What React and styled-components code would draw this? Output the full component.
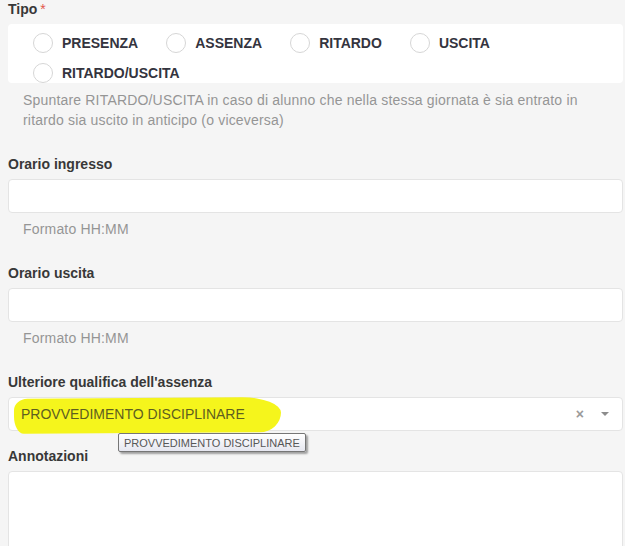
import React from "react";
import styled, { createGlobalStyle } from "styled-components";

const GlobalStyle = createGlobalStyle`
  html, body {
    margin: 0;
    padding: 0;
    background: #f5f5f5;
  }
  body {
    font-family: "Liberation Sans", Arial, sans-serif;
    font-size: 14px;
    color: #333;
  }
  * { box-sizing: border-box; }
`;

const Form = styled.div`
  padding: 0 2px 0 8px;
`;

const Group = styled.div`
  position: relative;
  margin-bottom: ${(props) => props.gap || 25}px;
`;

const Label = styled.label`
  display: block;
  font-weight: bold;
  font-size: 14px;
  line-height: 18px;
  color: #383838;
  margin-bottom: 6px;
`;

const Required = styled.span`
  color: #e2574c;
  font-weight: normal;
  margin-left: 3px;
`;

const RadioPanel = styled.div`
  background: #fff;
  border-radius: 4px;
  height: 59px;
  overflow: hidden;
  padding: 4px 0 0 25px;
  display: flex;
  flex-wrap: wrap;
  column-gap: 28px;
  align-content: flex-start;
`;

const RadioItem = styled.label`
  display: flex;
  align-items: center;
  height: 30px;
  gap: 9px;
  font-weight: bold;
  font-size: 14px;
  color: #34343e;
  cursor: pointer;
`;

const Circle = styled.span`
  width: 20px;
  height: 20px;
  border-radius: 50%;
  border: 1px solid #d6d6d6;
  background: #fff;
  flex-shrink: 0;
`;

const Help = styled.p`
  margin: ${(props) => props.top || 6}px 0 0;
  padding: 0 15px;
  font-size: 14px;
  line-height: 20px;
  letter-spacing: 0.18px;
  color: #959595;
`;

const Input = styled.div`
  height: 34px;
  background: #fff;
  border: 1px solid #e4e4e4;
  border-radius: 4px;
`;

const Select = styled.div`
  position: relative;
  height: 34px;
  background: #fff;
  border: 1px solid #e4e4e4;
  border-radius: 4px;
  display: flex;
  align-items: center;
  padding: 0 12px;
`;

const Marker = styled.span`
  position: absolute;
  left: 5px;
  top: 0px;
  width: 267px;
  height: 35px;
  background: #f5f51c;
  border-radius: 14px 40px 22px 10px / 12px 16px 20px 18px;
  transform: rotate(-0.4deg);
`;

const Value = styled.span`
  position: relative;
  flex: 1;
  font-size: 14px;
  color: #5e5e20;
  white-space: nowrap;
`;

const Clear = styled.span`
  font-size: 14px;
  font-weight: bold;
  color: #9a9a9a;
  margin-right: 17px;
`;

const Caret = styled.span`
  width: 0;
  height: 0;
  border-left: 4px solid transparent;
  border-right: 4px solid transparent;
  border-top: 4px solid #8c8c8c;
  margin-right: 1px;
`;

const Tooltip = styled.div`
  position: absolute;
  left: 110px;
  top: 60px;
  height: 19px;
  padding: 0 5px;
  display: flex;
  align-items: center;
  border: 1px solid #767676;
  border-radius: 2px;
  background: linear-gradient(#ffffff, #e6e7f0);
  box-shadow: 2px 2px 2px rgba(0, 0, 0, 0.35);
  font-size: 11px;
  color: #575757;
  white-space: nowrap;
  z-index: 2;
`;

const TextArea = styled.div`
  height: 110px;
  background: #fff;
  border: 1px solid #e4e4e4;
  border-radius: 4px;
`;

const tipi = ["PRESENZA", "ASSENZA", "RITARDO", "USCITA", "RITARDO/USCITA"];

export default function App() {
  return (
    <>
      <GlobalStyle />
      <Form>
        <Group>
          <Label>
            Tipo<Required>*</Required>
          </Label>
          <RadioPanel>
            {tipi.map((t) => (
              <RadioItem key={t}>
                <Circle />
                {t}
              </RadioItem>
            ))}
          </RadioPanel>
          <Help top={7}>
            Spuntare RITARDO/USCITA in caso di alunno che nella stessa giornata è sia entrato in
            ritardo sia uscito in anticipo (o viceversa)
          </Help>
        </Group>

        <Group>
          <Label>Orario ingresso</Label>
          <Input />
          <Help>Formato HH:MM</Help>
        </Group>

        <Group>
          <Label>Orario uscita</Label>
          <Input />
          <Help>Formato HH:MM</Help>
        </Group>

        <Group gap={16}>
          <Label>Ulteriore qualifica dell'assenza</Label>
          <Select>
            <Marker />
            <Value>PROVVEDIMENTO DISCIPLINARE</Value>
            <Clear>×</Clear>
            <Caret />
          </Select>
          <Tooltip>PROVVEDIMENTO DISCIPLINARE</Tooltip>
        </Group>

        <Group>
          <Label>Annotazioni</Label>
          <TextArea />
        </Group>
      </Form>
    </>
  );
}
